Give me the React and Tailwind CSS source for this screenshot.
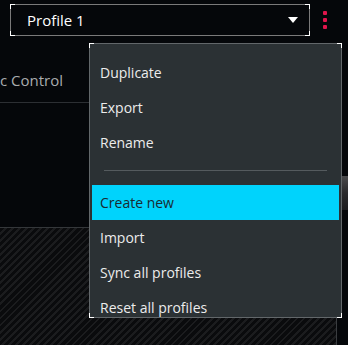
import React from 'react';

const font = { fontFamily: '"Open Sans", "Noto Sans", sans-serif' };

// white L-shaped corner accents over a thin grey border
const Corners = ({ size = 'w-[5px] h-[5px]' }) => (
  <>
    <span className={`absolute -left-px -top-px ${size} border-l border-t border-white`} />
    <span className={`absolute -right-px -top-px ${size} border-r border-t border-white`} />
    <span className={`absolute -left-px -bottom-px ${size} border-l border-b border-white`} />
    <span className={`absolute -right-px -bottom-px ${size} border-r border-b border-white`} />
  </>
);

const MenuItem = ({ label, active }) => (
  <div
    className={`h-[35px] flex items-center px-[8px] text-[14px] ${
      active ? 'bg-[#00d3fc] text-[#1a2a30]' : 'text-[#ececec]'
    }`}
  >
    {label}
  </div>
);

const ProfileMenu = () => {
  const top = ['Duplicate', 'Export', 'Rename'];
  const bottom = ['Create new', 'Import', 'Sync all profiles', 'Reset all profiles'];

  return (
    <div className="absolute left-[89px] top-[43px] w-[253px] h-[275px] bg-[#2b3134] border border-[#62676a]">
      <Corners />
      <div className="h-full overflow-hidden pt-[11px] px-[2px]">
        {top.map((item) => (
          <MenuItem key={item} label={item} />
        ))}
        <div className="h-[25px] pt-[10px] px-[12px]">
          <div className="h-px bg-[#555b5e]" />
        </div>
        {bottom.map((item) => (
          <MenuItem key={item} label={item} active={item === 'Create new'} />
        ))}
      </div>
    </div>
  );
};

const App = () => {
  return (
    <div className="relative w-[348px] h-[345px] overflow-hidden bg-[#05070a]" style={font}>
      {/* profile selector */}
      <div className="flex items-center pt-[4px] pl-[10px]">
        <div className="relative w-[300px] h-[32px] border border-[#7a7a7a] flex items-center pl-[16px] pr-[11px]">
          <Corners />
          <span className="flex-1 text-[15px] text-white">Profile 1</span>
          <svg width="10" height="6" viewBox="0 0 10 6">
            <path d="M0 0 H10 L5 6 Z" fill="#ffffff" />
          </svg>
        </div>
        <div className="ml-[13px] flex flex-col gap-[3px]">
          <span className="w-[4px] h-[4px] rounded-[1px] bg-[#e0154c]" />
          <span className="w-[4px] h-[4px] rounded-[1px] bg-[#e0154c]" />
          <span className="w-[4px] h-[4px] rounded-[1px] bg-[#e0154c]" />
        </div>
      </div>

      {/* page behind the menu */}
      <div className="flex mt-[32px]">
        <div className="w-[336px]">
          <div className="h-[35px] border-b border-[#2c2f33] flex items-start">
            <span className="text-[15px] text-[#a9acae] leading-[20px] pt-[2px]">c Control</span>
          </div>
          <div className="h-[125px] border-b border-[#34373a]" />
          <div className="h-[120px] bg-[repeating-linear-gradient(135deg,#0a0b0d_0px,#0a0b0d_3px,#1b1c1e_3px,#1b1c1e_5px)]" />
        </div>
        <div className="flex-1 border-l border-[#3a3d40] flex flex-col">
          <div className="h-[108px]" />
          <div className="h-[34px] bg-gradient-to-b from-[#4a4a4c] via-[#2a2a2c] to-[#1c1c1e]" />
        </div>
      </div>

      <ProfileMenu />
    </div>
  );
};

export default App;
